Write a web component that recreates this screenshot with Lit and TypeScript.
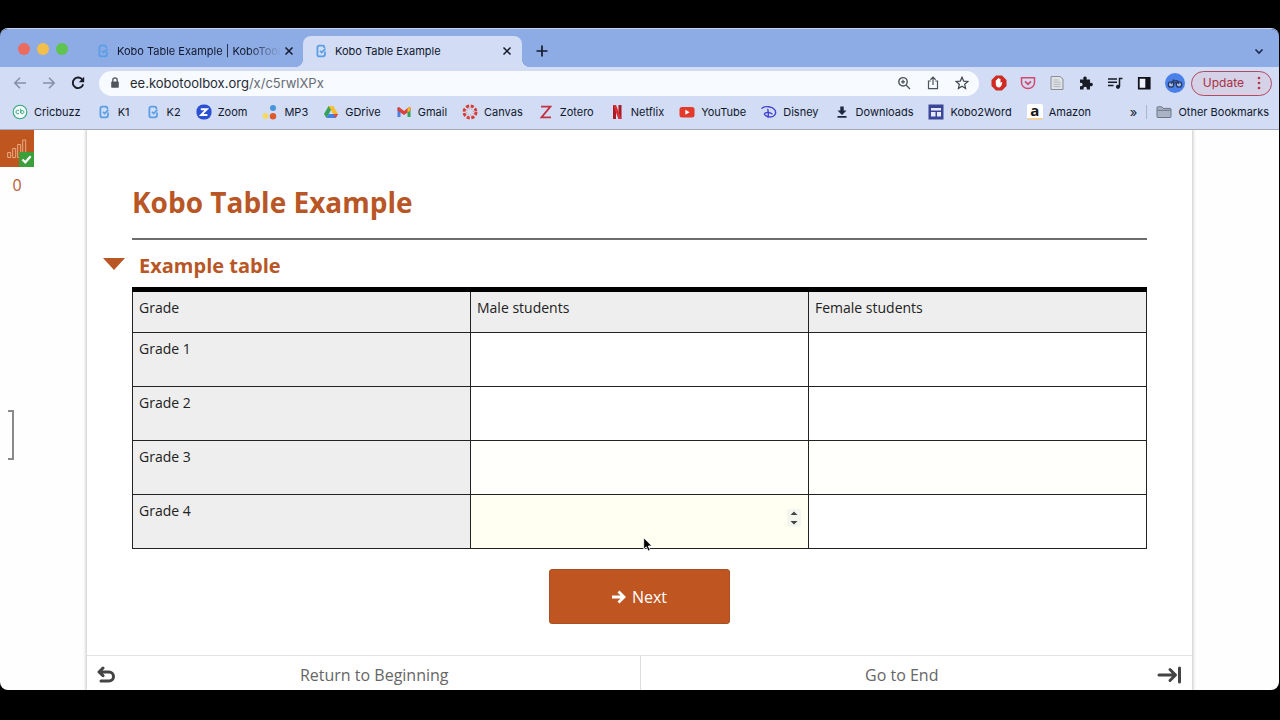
import { LitElement, html, css, svg, nothing } from "lit";
import { customElement, state } from "lit/decorators.js";
import { classMap } from "lit/directives/class-map.js";

const icon = (body: unknown, size = 16, box = 16) =>
  html`<svg width=${size} height=${size} viewBox="0 0 ${box} ${box}" aria-hidden="true">${body}</svg>`;

const kobo = icon(svg`<path d="M11.300 5V4.300Q11.300 2.700 9.700 2.700H6.300Q4.400 2.700 4.400 4.600v6.800Q4.400 13.300 6.300 13.300H9.700Q12 13.300 12 11V8.400" fill="none" stroke="#5a9fe6" stroke-width="1.800"/><path d="m7 7.800 1.700 1.700L12.400 5.600" fill="none" stroke="#5a9fe6" stroke-width="1.700"/>`);

const glyphs = {
  cricbuzz: icon(svg`<circle cx="8" cy="8" r="6.8" fill="#f4fbf8" stroke="#2fa67c" stroke-width="1.1"/><path d="M7 6.7a1.8 1.8 0 1 0 0 2.6M8.7 4.6v4.6M8.7 8a1.6 1.6 0 1 1 0 .1" fill="none" stroke="#2fa67c"/>`),
  kobo,
  zoom: icon(svg`<rect x=".5" y=".5" width="15" height="15" rx="6.5" fill="#2b50d4"/><path d="M4.8 5.2h6L5.2 10.9h6.2" fill="none" stroke="#fff" stroke-width="2"/>`),
  mp3: icon(svg`<circle cx="11" cy="4" r="3" fill="#4596dc"/><circle cx="3.5" cy="12" r="3" fill="#f3d965"/><circle cx="11" cy="12.3" r="3.2" fill="#dc5a2c"/>`),
  drive: icon(svg`<path d="M5.6 2h4.6L5.8 10 3.4 14 1 10z" fill="#36a15a"/><path d="M5.6 2h4.6l4.9 8h-4.8z" fill="#f6bf2f"/><path d="M5.7 10H15l-2.3 4H3.4z" fill="#4580e5"/><path d="M10.3 10H15l-2.3 4z" fill="#df4b3c"/>`),
  gmail: icon(svg`<path d="M1.5 4v9h3V6z" fill="#4a7fe5"/><path d="M14.5 4v9h-3V6z" fill="#35a256"/><path d="M1.5 3.6 3 3l5 4 5-4 1.500.6v3L8 11 1.500 6.600z" fill="#d8423a"/><path d="M11.500 4.300 13 3l1.500.6v3l-3 2z" fill="#f1b82d"/>`),
  canvas: icon(svg`<circle cx="8" cy="8" r="6" fill="none" stroke="#d43e34" stroke-width="2.900" stroke-dasharray="3.100 1.612"/><circle cx="8" cy="8" r="3.300" fill="none" stroke="#dc7a76" stroke-width="1" stroke-dasharray="1 1.590" stroke-dashoffset="-1"/>`),
  zotero: icon(svg`<path d="M3 2.700h9.400L3.500 13.300H13" fill="none" stroke="#c43242" stroke-width="1.800"/>`),
  netflix: icon(svg`<path d="M4 1h3v14H4zM9.500 1h3v14h-3z" fill="#a71c25"/><path d="M4 1h3l5.500 14h-3z" fill="#dc2d33"/>`),
  youtube: icon(svg`<rect x=".5" y="3" width="15" height="10.500" rx="2.500" fill="#e33a2c"/><path d="M6.300 5.700v5L10.600 8.200z" fill="#fff"/>`),
  disney: icon(svg`<path d="M1 4.200C4 1.800 11 2.200 13.600 5.600c2.600 3.600-.3 7.800-5.200 7.300C5.600 12.600 3 11 3.500 9.700 4.200 8 9 8.300 11 9.800M6.800 5.500c.6 2 .7 5 .3 8" fill="none" stroke="#4444cf" stroke-width="1.400" stroke-linecap="round"/>`),
  download: icon(svg`<path d="M6.300 2.500h3.400v4h2.800L8 11 3.500 6.500h2.800zM3.500 12h9v1.700h-9z" fill="#1d2740"/>`),
  word: icon(svg`<rect x=".5" y=".5" width="15" height="15" fill="#3b4699"/><path d="M3 4h10v2.500H3zM3 8h4.500v4.500H3zM9 8h4v4.500H9z" fill="#e6eaff"/>`),
  folder: icon(svg`<path d="M1 12.800V3.600q0-.8.800-.8h4l1.400 1.600h7q.8 0 .8.800v7.600q0 .7-.8.700H1.800q-.8 0-.8-.7z" fill="#a9b3c5" stroke="#6c7688"/><path d="M1.300 6.300h13.400" stroke="#6c7688"/>`),
};

const tool = {
  back: icon(svg`<path d="M14 8H3M8 2.800 2.800 8 8 13.200" fill="none" stroke="#868ea6" stroke-width="1.500"/>`),
  forward: icon(svg`<path d="M2 8h11M8 2.800 13.200 8 8 13.200" fill="none" stroke="#868ea6" stroke-width="1.500"/>`),
  reload: icon(svg`<path d="M12.600 5A5.300 5.300 0 1 0 13.200 9.300" fill="none" stroke="#171b26" stroke-width="1.900"/><path d="M14.200 1.800v5.400H8.800z" fill="#171b26"/>`),
  lock: icon(svg`<rect x="4.200" y="6.600" width="7.600" height="6.200" rx=".8" fill="#50555c"/><path d="M5.800 7V5a2.200 2.200 0 0 1 4.400 0v2" fill="none" stroke="#50555c" stroke-width="1.300"/>`),
  magnify: icon(svg`<circle cx="7" cy="6.800" r="4.200" fill="none" stroke="#4d535c" stroke-width="1.400"/><path d="m10 10 4 4M5 6.800h4M7 4.800v4" stroke="#4d535c" stroke-width="1.300"/>`),
  share: icon(svg`<path d="M5.700 6H3.500v7.700h9V6h-2.200M8 10V2.300M5.400 4.700 8 2.200l2.600 2.500" fill="none" stroke="#4d535c" stroke-width="1.200"/>`),
  star: icon(svg`<path d="m8 2.200 1.700 3.900 4.200.4-3.200 2.800.9 4.200L8 11.300l-3.600 2.200.9-4.200-3.200-2.800 4.200-.4z" fill="none" stroke="#3f454e" stroke-width="1.200"/>`),
  stop: icon(svg`<path d="M5 .5h6L15.500 5v6L11 15.500H5L.5 11V5z" fill="#cf2b22"/><path d="M4.800 8V5.300q.7-.6 1.100 0V4q.7-.7 1.200 0v-.7q.7-.7 1.200 0V4q.8-.6 1.200 0v4l.9-1q1-.3.900.5-1 5-3.500 5-2.500 0-3-3z" fill="#fff"/>`),
  pocket: icon(svg`<path d="M1.500 2.800h13v4.700a6.500 6 0 0 1-13 0z" fill="none" stroke="#d4486d" stroke-width="1.500"/><path d="M5 6.300 8 9.200l3-2.900" fill="none" stroke="#d4486d" stroke-width="1.700"/>`),
  page: icon(svg`<path d="M2 1.500h9l3 2.500v10.500H2z" fill="#dfe2e6" stroke="#898d94"/><path d="M4.500 5h5M4.500 7.200h7M4.500 9.400h7M4.500 11.600h7" stroke="#b3b7bd"/>`),
  puzzle: icon(svg`<path d="M2 4.500h3.600C4.700 2.700 5.700 1.500 7 1.500s2.300 1.200 1.400 3H12V8c1.600-.8 2.800.1 2.800 1.500S13.600 11.800 12 11v3.500H8.700c.5-1.800-.3-2.700-1.500-2.700s-2.100.9-1.500 2.700H2v-3.300c1.700.5 2.600-.4 2.600-1.600S3.700 7.500 2 8z" fill="#171b26"/>`),
  queue: icon(svg`<path d="M1 4h9M1 7.200h9M1 10.400h5.500" stroke="#171b26" stroke-width="1.500"/><path d="M12.500 11.500V3.500H15.500" fill="none" stroke="#171b26" stroke-width="1.500"/><circle cx="11" cy="11.800" r="2.100" fill="#171b26"/>`),
  panel: icon(svg`<path d="M2.800 2.800h10.900v10.900H2.800z" fill="#f0f3fb" stroke="#11141c" stroke-width="1.800"/><path d="M9.300 2.500h4.500V14H9.300z" fill="#11141c"/>`),
  avatar: icon(svg`<circle cx="10" cy="10" r="10" fill="#4b80e8"/><circle cx="6" cy="11.500" r="2.700" fill="#a5bfee" stroke="#283963" stroke-width="1.300"/><circle cx="14" cy="11.500" r="2.700" fill="#a5bfee" stroke="#283963" stroke-width="1.300"/><path d="m6 11 2.200-3.200h4.300L14 11M8 9.800h4.500M7.500 7h2" fill="none" stroke="#283963" stroke-width="1.200"/>`, 20, 20),
  close: icon(svg`<path d="m1.500 1.500 7 7m0-7-7 7" stroke="#151b2b" stroke-width="1.500"/>`, 10, 10),
  plus: icon(svg`<path d="M6 .5v11M.5 6h11" stroke="#151b2b" stroke-width="1.700"/>`, 12, 12),
  chevron: icon(svg`<path d="M1.500 3.500 5 7l3.500-3.500" fill="none" stroke="#1c2a4d" stroke-width="1.700"/>`, 10, 10),
};

type GlyphName = keyof typeof glyphs | "amazon";
const bookmarks: [GlyphName, string][] = [
  ["cricbuzz", "Cricbuzz"], ["kobo", "K1"], ["kobo", "K2"], ["zoom", "Zoom"],
  ["mp3", "MP3"], ["drive", "GDrive"], ["gmail", "Gmail"], ["canvas", "Canvas"],
  ["zotero", "Zotero"], ["netflix", "Netflix"], ["youtube", "YouTube"],
  ["disney", "Disney"], ["download", "Downloads"], ["word", "Kobo2Word"], ["amazon", "Amazon"],
];

@customElement("browser-chrome")
class BrowserChrome extends LitElement {
  static styles = css`
    :host { display: block; font: 400 11px/16px Inter, sans-serif; color: #10182c; }
    * { box-sizing: border-box; }
    svg { display: block; flex: none; }
    button { font: inherit; color: inherit; background: none; border: 0; padding: 0; display: flex; align-items: center; }
    .strip { display: flex; height: 38px; background: #8dabe4; align-items: center; padding: 7px 15px 0 18px; }
    .lights { display: flex; gap: 7px; width: 77px; padding-bottom: 6px; }
    .light { width: 12px; height: 12px; border-radius: 50%; background: #ec6a5e; }
    .light.min { background: #f2be4c; }
    .light.max { background: #5fc350; }
    .tab { display: flex; align-items: center; gap: 6px; width: 208px; height: 31px; padding: 0 8px 2px 0; }
    .tab.active { position: relative; width: 219px; padding: 0 10px 2px; background: #d2dcf5; border-radius: 8px 8px 0 0; }
    .tab.active::before, .tab.active::after { content: ""; position: absolute; bottom: 0; width: 8px; height: 8px; }
    .tab.active::before { right: 100%; background: radial-gradient(circle at 0 0, transparent 8px, #d2dcf5 8px); }
    .tab.active::after { left: 100%; background: radial-gradient(circle at 100% 0, transparent 8px, #d2dcf5 8px); }
    .title { flex: 1; white-space: nowrap; }
    .faded { flex: none; width: 165px; margin-right: -4px; mask-image: linear-gradient(90deg, #000 130px, transparent 164px); }
    .new { margin: 0 0 2px 14px; }
    .more-tabs { margin: 0 0 2px auto; }
    .bar { display: flex; align-items: center; height: 32px; background: #d2dcf5; padding: 0 7px 0 12px; }
    .nav { display: flex; gap: 13px; width: 87px; }
    .address { flex: 1; min-width: 0; display: flex; align-items: center; height: 25px; border-radius: 13px; background: #f7fafe; padding: 0 9px 0 8px; gap: 7px; font-size: 13px; color: #262b33; }
    .url { flex: 1; }
    .path { color: #666b73; }
    .inner, .extensions { display: flex; align-items: center; gap: 13px; }
    .extensions { margin: 0 6px 0 12px; }
    .update { height: 25px; border: 1px solid #b04a62; border-radius: 13px; padding: 0 10px 0 11px; gap: 13px; color: #a83045; background: #d5d1e6; font-size: 12px; }
    .marks { display: flex; align-items: center; height: 31px; background: #d2dcf5; border-bottom: 1px solid #a2a9bb; padding: 0 10px 4px 12px; gap: 15px; }
    .mark { display: flex; align-items: center; gap: 6px; color: inherit; text-decoration: none; white-space: nowrap; }
    .amazon { width: 16px; height: 16px; border-radius: 2px; background: #fff; border-bottom: 2px solid #f2cf9a; color: #151515; font: 700 15px/12px "Open Sans", sans-serif; text-align: center; }
    .rest { margin-left: auto; display: flex; align-items: center; gap: 9px; }
    .rule { width: 1px; height: 14px; background: #a9b5d2; }
    .overflow { font-size: 13px; }
  `;

  render() {
    return html`
      <div class="strip">
        <div class="lights"><span class="light"></span><span class="light min"></span><span class="light max"></span></div>
        <div class="tab">${kobo}<span class="title faded">Kobo Table Example | KoboTool</span><button aria-label="Close tab">${tool.close}</button></div>
        <div class="tab active">${kobo}<span class="title">Kobo Table Example</span><button aria-label="Close tab">${tool.close}</button></div>
        <button class="new" aria-label="New tab">${tool.plus}</button>
        <button class="more-tabs" aria-label="Search tabs">${tool.chevron}</button>
      </div>
      <div class="bar">
        <div class="nav">
          <button aria-label="Back">${tool.back}</button><button aria-label="Forward">${tool.forward}</button><button aria-label="Reload">${tool.reload}</button>
        </div>
        <div class="address">
          ${tool.lock}<span class="url">ee.kobotoolbox.org<span class="path">/x/c5rwlXPx</span></span>
          <span class="inner"><button aria-label="Zoom">${tool.magnify}</button><button aria-label="Share">${tool.share}</button><button aria-label="Bookmark">${tool.star}</button></span>
        </div>
        <div class="extensions">
          ${[tool.stop, tool.pocket, tool.page, tool.puzzle, tool.queue, tool.panel, tool.avatar].map((g) => html`<button aria-label="Extension">${g}</button>`)}
        </div>
        <button class="update">Update ${html`<svg width="4" height="14" viewBox="0 0 4 14"><circle cx="2" cy="2" r="1.300" fill="#b8324a"/><circle cx="2" cy="7" r="1.300" fill="#b8324a"/><circle cx="2" cy="12" r="1.300" fill="#b8324a"/></svg>`}</button>
      </div>
      <nav class="marks">
        ${bookmarks.map(([name, label]) => html`<a class="mark" href="#">${name === "amazon" ? html`<span class="amazon">a</span>` : glyphs[name]}${label}</a>`)}
        <span class="rest"><span class="overflow">»</span><span class="rule"></span><a class="mark" href="#">${glyphs.folder}Other Bookmarks</a></span>
      </nav>
    `;
  }
}

@customElement("kobo-form")
class KoboForm extends LitElement {
  @state() private grades = ["Grade 1", "Grade 2", "Grade 3", "Grade 4"];

  static styles = css`
    :host { flex: 1; display: grid; grid-template-columns: 1fr minmax(0, 1105px) 1fr; background: #fefefe; font-family: "Open Sans", "Noto Sans", sans-serif; color: #222; }
    * { box-sizing: border-box; }
    svg { display: block; }
    .rail { display: flex; flex-direction: column; align-items: flex-start; }
    .status { position: relative; width: 34px; height: 37px; background: #bf5620; padding: 9px 0 0 7px; }
    .ok { position: absolute; right: 0; bottom: 0; width: 15px; height: 15px; background: #3c9f3a; }
    .queued { width: 34px; text-align: center; font-size: 16px; line-height: 22px; margin-top: 7px; color: #b85a33; }
    .bracket { width: 6px; height: 50px; margin: 214px 0 0 8px; border: solid #8a8a8a; border-width: 2px 2px 2px 0; }
    .card { display: flex; flex-direction: column; background: #fff; box-shadow: 0 0 3px 1px #c4c4c4; clip-path: inset(0 -8px); }
    .body { padding: 52px 45px 0; }
    h1, h2 { margin: 0; color: #b95625; font-weight: 700; }
    h1 { font-size: 28px; line-height: 40px; padding-bottom: 16px; border-bottom: 2px solid #6d6d6d; }
    h2 { display: flex; align-items: center; gap: 14px; font-size: 20px; line-height: 28px; margin: 12px 0 7px -29px; }
    .fold { border: 0; background: none; padding: 0; margin-bottom: 4px; }
    table { width: 100%; border-collapse: collapse; table-layout: fixed; border-top: 5px solid #000; font-size: 14px; line-height: 20px; }
    th, td { border: 1px solid #222; padding: 0; vertical-align: top; text-align: left; }
    thead th { border-top: 5px solid #000; height: 43px; }
    th { font-weight: 400; background: #eee; padding: 6px 6px 0; }
    tbody th, td { height: 54px; }
    td { position: relative; background: #fff; }
    .warm { background: #fffffb; }
    .active { background: #fffff2; }
    input { display: block; width: 100%; height: 53px; padding: 0 30px 0 8px; border: 0; background: transparent; font: inherit; outline: none; appearance: textfield; }
    input::-webkit-inner-spin-button { display: none; }
    .spin { position: absolute; right: 7px; top: 14px; }
    .pointer { position: absolute; left: 172px; top: 42px; z-index: 1; }
    .next { display: flex; align-items: center; justify-content: center; gap: 6px; width: 181px; height: 55px; margin: 20px auto; border: 1px solid #aa4f22; border-radius: 3px; background: #bf5622; color: #fff; font: 16px/22px "Open Sans", sans-serif; }
    .foot { display: grid; grid-template-columns: 1fr 1fr; height: 35px; margin-top: auto; border-top: 1px solid #e2e2e2; }
    .foot a { display: flex; align-items: center; gap: 4px; padding: 4px 10px 0; color: #666; font-size: 16px; line-height: 22px; text-decoration: none; }
    .foot a + a { border-left: 1px solid #ddd; }
    .label { flex: 1; text-align: center; }
  `;

  private cell(row: number, col: number, label: string) {
    const active = row === 3 && col === 0;
    return html`<td class=${classMap({ warm: row === 2, active })}>
      <input type="number" aria-label=${label} />
      ${active
        ? html`<svg class="spin" width="14" height="18" viewBox="0 0 14 18"><rect width="14" height="18" rx="3" fill="#f3f6ef"/><path d="M3.500 6 7 2.500 10.500 6zM3.500 12 7 15.500 10.500 12z" fill="#444"/></svg>
          <svg class="pointer" width="10" height="16" viewBox="0 0 10 16"><path d="M.7.8v11.500l2.600-2.500 1.900 4.300 2-.9-1.900-4.200h3.600z" fill="#000" stroke="#fff" stroke-width=".8"/></svg>`
        : nothing}
    </td>`;
  }

  render() {
    return html`
      <aside class="rail">
        <div class="status">
          <svg width="20" height="20" viewBox="0 0 20 20"><path d="M.7 13.500h3v5h-3zM5.700 9.500h3v9h-3zM10.700 5.500h3v13h-3zM15.700 1h3v17.500h-3z" fill="none" stroke="#e8ab82"/></svg>
          <span class="ok"><svg width="15" height="15" viewBox="0 0 15 15"><path d="m3.500 7.500 2.800 2.800 5.400-6" fill="none" stroke="#fff" stroke-width="2.200"/></svg></span>
        </div>
        <span class="queued">0</span>
        <span class="bracket"></span>
      </aside>
      <main class="card">
        <div class="body">
          <h1>Kobo Table Example</h1>
          <h2><button class="fold" aria-label="Collapse group"><svg width="22" height="12" viewBox="0 0 22 12"><path d="M0 0h22L11 12z" fill="#b95625"/></svg></button>Example table</h2>
          <table>
            <thead><tr><th scope="col">Grade</th><th scope="col">Male students</th><th scope="col">Female students</th></tr></thead>
            <tbody>
              ${this.grades.map((g, i) => html`<tr><th scope="row">${g}</th>${this.cell(i, 0, `${g}, male students`)}${this.cell(i, 1, `${g}, female students`)}</tr>`)}
            </tbody>
          </table>
          <button class="next"><svg width="14" height="14" viewBox="0 0 14 14"><path d="M0 7h12M6.500 1.500 12 7l-5.500 5.500" fill="none" stroke="#fff" stroke-width="2.800"/></svg>Next</button>
        </div>
        <nav class="foot">
          <a href="#"><svg width="18" height="18" viewBox="0 0 18 18"><path d="M2 6h10a4.500 4.500 0 0 1 0 9H4M6 2 2 6 6 9.700" fill="none" stroke="#444" stroke-width="3" stroke-linejoin="round" stroke-linecap="round"/></svg><span class="label">Return to Beginning</span></a>
          <a href="#"><span class="label">Go to End</span><svg width="25" height="18" viewBox="0 0 25 18"><path d="M2 9h16M13 3.500 18.500 9 13 14.500" fill="none" stroke="#444" stroke-width="3" stroke-linejoin="round" stroke-linecap="round"/><path d="M22.500 2v14" stroke="#444" stroke-width="3" stroke-linecap="round"/></svg></a>
        </nav>
      </main>
    `;
  }
}

@customElement("app-root")
class AppRoot extends LitElement {
  static styles = css`
    :host { display: flex; box-sizing: border-box; min-height: 100vh; padding: 28px 1px 30px 0; background: #000; }
    .window { flex: 1; min-width: 0; display: flex; flex-direction: column; border-top: 1px solid #c6d6ef; border-radius: 8px; overflow: hidden; }
  `;

  render() {
    return html`<div class="window"><browser-chrome></browser-chrome><kobo-form></kobo-form></div>`;
  }
}
